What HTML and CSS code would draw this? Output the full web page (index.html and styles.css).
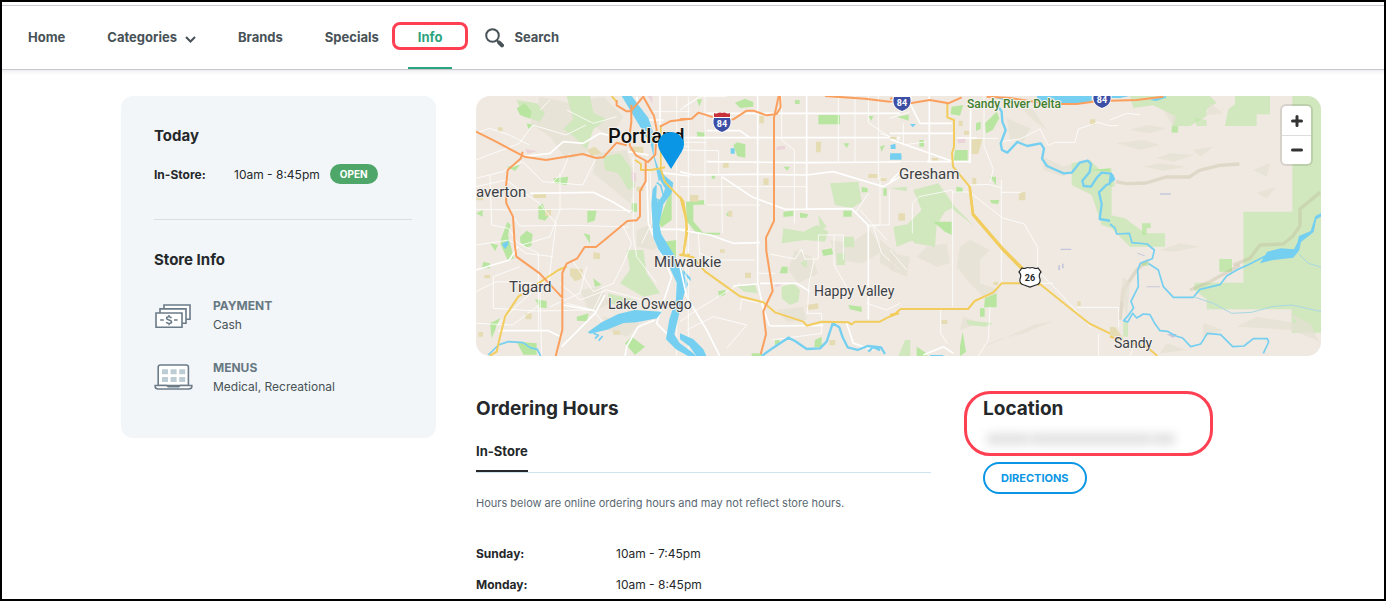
FILE: index.html
```html
<!DOCTYPE html>
<html lang="en">
<head>
    <meta charset="UTF-8">
    <meta name="viewport" content="width=device-width, initial-scale=1.0">
    <title>Store Info</title>
    <link rel="stylesheet" href="styles.css">
</head>
<body>
    <header class="header">
        <nav class="nav">
            <a href="#">Home</a>
            <button type="button" class="categories">Categories
                <svg class="chevron" width="11" height="7" viewBox="0 0 11 7"><path d="M1 1l4.500 4.500L10 1"/></svg>
            </button>
            <a href="#">Brands</a>
            <a href="#">Specials</a>
            <a href="#" class="active">Info<span class="highlight highlight-info"></span></a>
            <a href="#" class="search">
                <svg width="20" height="20" viewBox="0 0 20 20"><circle cx="7.500" cy="7.500" r="6.300"/><path class="lens-joint" d="M11.800 12.300l2 2"/><path class="handle" d="M14.200 14.600l2.800 2.800"/></svg>
                Search
            </a>
        </nav>
    </header>

    <div class="page">
        <aside class="sidebar">
            <h2>Today</h2>
            <div class="today">
                <strong>In-Store:</strong>
                <span>10am - 8:45pm</span>
                <span class="badge">OPEN</span>
            </div>
            <hr>
            <h2>Store Info</h2>
            <div class="info-list">
                <div class="info-item">
                    <svg width="39" height="38" viewBox="0 0 39 38" class="info-icon">
                        <path d="M10 9h26v14.300H10z"/>
                        <path d="M6 12.900h26v14.300H6z"/>
                        <path d="M2 17h26v14.200H2z"/>
                        <path class="dollar" d="M6.200 24h3.600M20 24h3.600M17.400 22.200c-.6-1.900-4.800-1.800-4.800 0 0 2.200 5 1.300 5 3.700 0 2.100-4.600 2-5.200 0M15 18.900v1.800M15 27.400v1.800"/>
                    </svg>
                    <div>
                        <h3>PAYMENT</h3>
                        <p>Cash</p>
                    </div>
                </div>
                <div class="info-item">
                    <svg width="39" height="38" viewBox="0 0 39 38" class="info-icon">
                        <path d="M4.200 27.500V9.200q0-2.200 2.200-2.200h25.800q2.200 0 2.200 2.200v18.300z"/>
                        <path d="M1.200 27.500h11.500l1.500 1.200h10.600l1.500-1.200h11.500v1q0 2.500-3.200 2.500H4.400q-3.200 0-3.200-2.500z"/>
                        <path class="screen" d="M8 11.200h6v5H8zM16.600 11.200h6v5h-6zM25.200 11.200h6v5h-6zM8 19h6v5H8zM16.600 19h6v5h-6zM25.200 19h6v5h-6z"/>
                    </svg>
                    <div>
                        <h3>MENUS</h3>
                        <p>Medical, Recreational</p>
                    </div>
                </div>
            </div>
        </aside>

        <main class="content">
            <div class="map">
                <svg class="map-canvas" viewBox="0 0 845 260" preserveAspectRatio="xMidYMid slice">
                    <defs>
                        <g id="interstate">
                            <path d="M-9-6h18q2 9-3 13-3 3-6 4-3-1-6-4-5-4-3-13z" fill="#fff"/>
                            <path d="M-8-4H8q2 7-2.500 11-2.500 2-5.500 3-3-1-5.500-3Q-10 3-8-4z" fill="#3d4fa5"/>
                            <path d="M-8-5v-4q2 1 4 0 2-1 4 0 2-1 4 0 2 1 4 0v4z" fill="#c8303a"/>
                        </g>
                    </defs>

                    <!-- west: Beaverton, Tigard -->
                    <g transform="translate(-6 -6) scale(.33333)">
                        <path class="hill" d="M210 20l90 20 70 60-20 90-60 20-50-70-60-40zM380 190l90-10 30 90-20 70-60-50-50-40zM500 420l50-20 30 60-30 20-50-10zM330 600l60-10 30 50-60 30zM400 680l110 20-40 40-60-20zM340 30l60-10 60 60-40 60-60-40z"/>
                        <path class="wood" d="M140 30l60 10 25 30-15 25-50-15zM290 18h70l10 50 40 20-40 30-20 60-40-40-30-20 30-30zM400 200l50-10 30 40 15 60-20 10-30-50-40-10zM470 480h50l10 70 40 60-50 10-70-40 30-40zM415 610l80 20-30 20-50-10z"/>
                        <path class="park" d="M205 350l12-10 18 40-10 12-20-5zM352 362h28l-6 30-22 6zM150 440l20-18 18 10-4 35-15 6-18-16zM92 450l20-55 10 10-8 30 18 70-18 8-22-50zM140 55l25-15 20 25-5 20-30-10zM250 265l45-5-5 25-35-5zM40 515l20 5v15H35zM60 460l25 5-10 18zM195 628l35 5v22l-22-3zM565 400l30-80 10-20v90l-30 22zM580 455l40-5v50l-25 10zM60 700l30-15-25 60zM465 760l20-20 40 30-30 25zM320 680l36-10-5 24-30-2zM140 755l60 5v34h-40zM340 430l20 5v25zM370 565l25 20-20 5zM110 230l40-5-15 18zM485 340h16v25h-16zM18 370l20-10v20zM170 100l20 5-15 12z"/>
                        <path class="tan" d="M225 358h18v20h-18zM300 535l38 3-3 28-20 8-15-18zM370 487l20 3v17h-20zM18 315h22v16H18zM500 290h20v14h-20zM190 312h38v12h-38zM165 670h20v18h-18zM430 722h20v12h-20zM43 555h18v10H43zM350 180l25-10 20 20-30 8zM84 112h14v12H84zM480 170h40v20h-40zM25 726h14v14H25z"/>
                        <path class="pink" d="M165 178l38 5-30 8zM484 245l14 5v22h-14zM620 130l16 6-8 12zM533 18h14v22z"/>
                        <path class="road thin" d="M18 265l80-20 60-30 60 60 120 10 40-80M18 358l140 2 150-3 180 5M60 255l5 150 50 10 30 45 60 30v230M18 290l90-20 100 70 50 60-20 160-100 90-60 60M270 250v110l-30 80-85 25M118 358l30 50 170-2 160 5M18 465l100-15 50 40 80 10M300 190l-25 60-30 30M18 605l60-30 120 5M70 655V560l80-30M250 545l-40 65 5 185M270 580l60 50 80-30 110 30M310 515l60 90 60-25 30-60 25-60-30-60M290 60l80 40 70-20M210 60l30-30M18 130l40-15 60 20 60 30M18 210l130-50 40-55 100 30 60-30M490 200v240l10 60 60 80M540 240l5 160-30 60M620 20v780M655 20v780M575 170h84M545 65h115M18 700l110 5 80-60M400 600l-30 60-170 3-130-8M350 530l-20 80-90 40M290 640l80 20 30 40"/>
                        <path class="road" d="M160 200l80-10 40-35 60 5 50-30 50 10M180 310l190-3 60 30 50 30M18 540l100-30 25-40M280 645l95 18M275 770l100-100 30-55M85 722h150l40 20M555 690l-50 20-35 60-5 30M530 240l5 160 20 50 50 110-40 120-5 20 60 60 50 40M475 185l60 10M570 18v230l90 10M500 90h80M545 418h115M500 20l20 140"/>
                        <path class="water" d="M455 18h30l30 40 20 25 16 50v60l14 40 20 25 25 20-5 30-25 35-12 60 6 30 25 40 30 50 25 60-12 30-15 60-14 60 15 25 40 30 40 40v25l-45-50-45-25-30-30 10-60 20-60 2-50-30-65-25-35-15-35-6-100 4-45 18-25-10-50-14-60-30-50z"/>
                        <path class="water" d="M575 665l-80-5-50 12-50 25-42 30 8 4 50-12 50-20 40-2 60-12zM640 540l22 24v10l-22-24zM95 462l20-10v12l-10 14z"/>
                        <path class="land" d="M555 285l15-15 15 25-8 30-14 10-8-22z"/>
                        <path class="river" d="M55 795l30-30 30-10 45 3M160 758l20 15 22 5 10 20M370 730l15 6-10 10M398 738l-12 14M560 278l12 8 8 30-10 16-14-6 2-40"/>
                        <path class="arterial" d="M60 797l20-12 10-45 15-60 40-60 60-40 60-40 25-10M425 18l14 16M495 210l18 12v18h30l42-8M572 105v130l12 40 48 50 15 60 5 40-12 70M628 494h32"/>
                        <path class="freeway" d="M18 125l60 30 85 45 65 10 110-18 40 12 22-2 40-44 30 8M158 185l-5 20-40 35-6 60 2 40 20 40 5 80 5 40 70 50 70 75M440 30v16l30 18 12 0 38-44 12 22 20 36 8 40-4 76-22 22-36-20-18-28-3-20 7-52v-52M527 214v60l-17 30v75l-10 12-28 2-60 50-34 28h-34l-22 34-32 16-13 28v170l-20 80M570 110l30-16 60-8"/>
                    </g>

                    <!-- middle: Happy Valley -->
                    <g transform="translate(204 -6) scale(.33333)">
                        <path class="hill" d="M345 480l50 20 20 50-60 30-30-40zM290 660l80-10 10 40-60 5zM450 450l60 10 60-40 40 60-60 40-80-10zM600 450l50 40-10 50-40-20z"/>
                        <path class="wood" d="M310 415l60 10 40-20 35 20-10 30-60-5-70 10zM450 280l85-5 10 60-30 20-50-10zM305 590l35-10 20 20-5 35-25 10-25-20zM165 585h60l8 25-40-5zM360 520l20-10v25zM470 490h25v35h-25zM490 440h32v32h-32zM415 375l25 35-20 10z"/>
                        <path class="park" d="M165 38l30-12 25 10v14l-40 4zM415 75h65v28h-65zM160 165l12-8 24 6v40l-24-4zM18 335l55-5v14H40v50l30 35-25-5-25-30zM50 28h16l-8 22zM50 125l25 3v12H52zM95 256h10v10H95zM310 365l30-3v16l-30 3zM360 368l25 5-5 10h-20zM490 362h25v18h-25zM425 480l30-5 5 18-30 5zM305 530h18v20h-24zM114 604l22-5v15l-18 6zM505 645l40 5v16l-35-8zM545 290l18 5v12h-18zM405 750l20-10v32h-22zM345 30h14v12h-14zM490 160h18l-8 14zM565 78h16l-8 14zM610 295h10v22h-10zM600 170l15-5-10 20zM140 368h16v10h-16zM310 230h20l-8 12zM285 750h14v14h-14zM215 790h30v8h-30zM65 428h55v6H65z"/>
                        <path class="tan" d="M408 155h16l-2 32h-14zM238 78h14v22h-14zM250 265h16v20h-16zM30 315h25v20H30zM130 220l16-3v16h-18zM145 362h12v18h-12zM565 252h28v12h-28zM120 478h14v10h-14zM195 548h18v16h-18zM448 750h18v16h-18zM380 645l35-5v16l-30 4zM600 265h20v8h-20z"/>
                        <path class="pink" d="M290 170l25-3v10l-25 4zM285 580h28l-20 10h-8z"/>
                        <path class="water" d="M632 165l14-4v16h-12zM630 190h34v18l-30-4zM152 175h12v16h-12z"/>
                        <path class="road thin" d="M75 18v325M0 180l116 2v70M0 157h80M125 260l2 170M80 345h160M0 290h380M305 20v130l38 30v220M475 18v200M525 18v200M595 18v250M415 435h75v75M415 435v72h-40l-10-30-20 30-75-15M462 435v90l40 70M402 510l-15 70-5 90M380 670h45v60l-150 20M55 430l5 80M60 490l45 20h120M0 695l50-35 130-80M20 720l80-40 100 25-60 70M180 660l5-32 50 10M235 550h50M565 18v80l90 60M600 130l60 20M600 70h60M560 410l40-5V260M565 310l-40 60M540 360l80 90M580 410l25 80 55 50M560 640l60 20 40-20M18 470v150M0 60l60-40 80 0M60 20l-50 30M628 300v105h-60"/>
                        <path class="road" d="M233 18v560l15 70 20 60M380 18v340M0 245l40 10 180-2 160 2 80-10 150 45 50-30M0 420l90 15 70 25 80-2M125 260l90 60 100 38 200-2 50 50v282M240 580h110l40 25M160 588l70-6M0 143h660M80 70h580M80 215l300 3 280-2M270 708l160-2M0 530l20 90 60 100 40 80M500 700l20 60 60 20M80 122h100l30 22"/>
                        <path class="river wide" d="M245 798l35-25 45-30 20 10 35 24 40-2 20-20 18-55 20 12 10 30 15 30 30 8 30-12 40 4 12 20M565 785l15-14 20 10"/>
                        <path class="water" d="M0 730l40 18 30 30 10 22H50l-20-30-30-22z"/>
                        <path class="arterial" d="M0 320l10 14 10 60-2 40-8 60M0 494l40 8 35 42 105 75 70 18 35 30 85 28 10 12 45-12 80 2 10 6 10-8h75l22-12 35-14"/>
                        <path class="freeway" d="M0 88l35-2 20-18 20 6 50 16 35-2 40-26 20 0 40 14 30-4 12-20-2-34M296 18l-14 65v310l-24 50 1 40 19 120-20 42-8 20 8 68-16 60M435 18l120 8 100 12"/>
                    </g>

                    <!-- Gresham -->
                    <g transform="translate(414 -6) scale(.33333)">
                        <path class="hill" d="M210 470l30-20 60 30-30 30v70l60 20-40 30-50-50-40-50zM110 470l60-10 10 60-40 10-60-30zM0 490l60 10-10 60-50-20zM310 760l120-55 60-12-90 38-60 12-70 30zM350 85l70 30-20 40-40-5zM380 40l50 20 40 60-40-30zM460 200l60 30 60-20-60 50-60-20zM220 680l50 20-60 20z"/>
                        <path class="wood" d="M70 300l75-20 50 70 60 60-70-55-20 10-25 40-5 65-60-10-40-40 60-60zM10 410l60-10v50l-50 20zM545 220l55-10 30 30 35-5v180l-30-10-30-90-60-30zM230 690l80 10-25 10-50-5zM0 295l50-5v14zM45 750h16v48H25z"/>
                        <path class="park" d="M195 180h38v32h-42zM185 50l35-5-10 32-28-5zM285 100l35-35 8 20-20 35-20 10zM258 100l14-5v22l-14 6zM130 395h55v40l-20-10zM285 625l35-15v42h-38zM270 655h14v25h-14zM200 290l18 3v14h-20zM300 330h28l-4 12-20-2zM20 80l36-6v18zM88 150h14v20H88zM218 725l10 60-18 14v-30zM300 260h18v26zM600 240l60-5v10zM80 770l30 20v8H80z"/>
                        <path class="tan" d="M245 148l32-2-12 46h-20zM388 308l18-3v26h-20zM25 370h20v22H25zM206 92h12v16h-12zM222 122h16v12h-16zM247 264h12v20h-12zM154 690h18v12h-18zM600 88h16v16h-16zM310 575h14v10h-14zM562 634h10v14h-10zM126 204h18v10h-18zM0 140h20v8H0z"/>
                        <path class="pink" d="M202 148l24-4v14l-22 2z"/>
                        <path class="mauve" d="M512 476h32v4h-32zM505 526h5v14h-5zM516 521h5v14h-5z"/>
                        <path class="water" d="M440 18h165v18l-60 8-60-3-40-8zM300 18l60 10 60 12-60-3zM60 102h18l-10 10zM0 195l34 4v10H0zM2 165h14v12H2zM120 795h40v4h-40z"/>
                        <path class="road thin" d="M188 300v350M188 306h50l100 78 65 18 40 70v70l60 60 100 110M334 270v310M187 300l-100 20-20 20v90M235 285l60-2 39 10M334 307h60M152 660v70l20 30M300 650l-5 100-30 48M490 580h-60M560 652h100M626 730v68M0 480l50 60M40 100v65l70-10M0 85l60-20M282 18v150l28 70-10 40M245 145h80M330 155l60-8 60-30 25 50 20-10 60 0 10-40 60-20 30 10h30M0 215h180M0 40l60-15"/>
                        <path class="road" d="M60 40l30 60h95M118 18v200M0 148l185 65M242 50l-2 170M255 35l70 10M110 215h130M0 275l40-40M100 795l60-25 30 20M200 144h60M0 130h190"/>
                        <path class="river wide" d="M325 50l10 15 2 30 10 25-15 40 4 20 16 8 30-32 30 12 40-8 10 16-6 30 15 22 50 22 24-2 24-30 24-6 10 10-4 24-22 26 4 16 22 2 18-28 14-14 28 3-4 30-10 4-22 22 8 36-6 44 34 6"/>
                        <path class="arterial" d="M172 40v42l20 8v80l-6 20 3 40 50 60 10 80 90 105 60 60 50 46 80 65 70 55 62 30M0 675l15-4 17-14h202l20-24 55-25 26-28h90"/>
                        <path class="arterial heavy" d="M239 290l10 85 90 105 60 60 50 46"/>
                        <path class="freeway" d="M0 26l10-2M60 40l60-10 55 10 40-18M290 20l70 4 120 18 80 0 60-8 40-14"/>
                    </g>

                    <!-- east: Sandy -->
                    <g transform="translate(634 -6) scale(.33333)">
                        <path class="wood" d="M60 18h240l20 20-30 20v20l-50 30H205v18h-20l5-50-60-30-60 8zM375 18h105v55h-40v35h-95l10-50 20-15zM547 18h88v710h-90v-70H290v-30l-40-30 5-20h145V365h147zM0 375l45 10 60 45h60v40h-60L60 470 0 410z"/>
                        <path class="park" d="M328 507h38v38h-38zM95 515h20v12H95zM185 108h18v20h-18zM96 400h26v15h-12v20H96z" opacity=".8"/>
                        <path class="park" d="M40 695h14v45H40zM255 85l35 5v18h-30zM0 255l14 20v15H0z" opacity=".5"/>
                        <path class="ridge" d="M18 275l30 6 60-2 60-18h70l30-20 60-15 60-4M30 690l10-90 40-60 35-30M240 600l60-25 90-50"/>
                        <path class="ridge" d="M370 525l50-20 30-40 70-3 30-25 20-30v-50l60-50"/>
                        <path class="hill" d="M60 120l50-15 60 10-50 15zM20 160l80-10 50 15-60 15zM140 205l40-15 70 5-60 20zM250 180l60-10-40 30zM430 240l50-20-10 40zM440 310l60-20-30 35zM150 480l60-20 60 10-80 15zM40 560l-10 60 20 60 10-100zM380 710l60-30 120 20 60 50-80-30zM280 700l60 20-60 20zM170 760l60 20-80 10zM540 670l60 30 30 60-60-50zM100 230l50-10 80 10-70 12zM160 60l40 20-10 30zM300 40l40 30-50 5z"/>
                        <path class="tan" d="M0 710l16 2 30 42-46-16z"/>
                        <path class="mauve" d="M150 310h32v4h-32zM110 589h40v3h-40zM82 488l22 8v3l-22-8zM170 732h30l-10 12z"/>
                        <path class="water" d="M450 520l22-35 40-10 40 3 10-20 5-20 35-15 14-45 17-8v10l-14 8-8 38-38 30-5 25-18 22-60 7zM0 250l10 3 6 16-16 12zM0 18h60l-30 6H0zM120 30l48-12v5l-30 10z"/>
                        <path class="river" d="M0 402l15 12 5 18 38-2 8 28 45 4 22 18-6 26-36 14-8 20 2 50-22 44 8 20-16 22-14 16 12 4 15-26 12 14 20-12 20 2 14 26 16 22 22 2 26 14 20 6 24 26 30-8 20-32 40 4 36 36 34-2 28-22 42 0 4 10-16 34M115 520l30 20 15 50 30 32 60 0 20-24 60-14 20-26 30-18 35-16 50-25"/>
                        <path class="creek" d="M250 620l60 20 55 30 60-3 60-17 60-5 90 20M565 490l30 30 40 12"/>
                        <path class="road thin" d="M0 652h26v60M0 90l50-20 40 4M60 798l8-20"/>
                        <path class="arterial" d="M0 740l60 20 50 10 32 28"/>
                        <path class="freeway" d="M0 32l80-2 80-10"/>
                    </g>

                    <use href="#interstate" x="246" y="26"/>
                    <use href="#interstate" x="426" y="5"/>
                    <use href="#interstate" x="626" y="2"/>
                    <path class="us-route" d="M546 172q2 1 4 0 2-1 4 0 2-1 4 0 2 1 4 0l3 4q-3 3-1 7 1 5-4 6l-6 2-6-2q-5-1-4-6 2-4-1-7z"/>
                    <g class="shield-text">
                        <text x="246" y="31">84</text>
                        <text x="426" y="10">84</text>
                        <text x="626" y="7">84</text>
                        <text x="554" y="185" class="dark">26</text>
                    </g>
                    <g class="place">
                        <text x="0" y="101">averton</text>
                        <text x="33" y="196">Tigard</text>
                        <text x="132" y="213" class="small">Lake Oswego</text>
                        <text x="178" y="171">Milwaukie</text>
                        <text x="338" y="200" class="small">Happy Valley</text>
                        <text x="423" y="83">Gresham</text>
                        <text x="638" y="252" class="small">Sandy</text>
                        <text x="491" y="12" class="park-name">Sandy River Delta</text>
                        <text x="132" y="47" class="city">Portland</text>
                    </g>
                    <path class="pin" d="M195 73l-10.500-17Q182 52 182 48.500a13 12.500 0 0 1 26 0q0 3.500-2.500 7.500z"/>
                </svg>
                <div class="zoom">
                    <button type="button" aria-label="Zoom in"><svg width="12" height="12" viewBox="0 0 12 12"><path d="M1.500 6h9M6 1.500v9"/></svg></button>
                    <button type="button" aria-label="Zoom out"><svg width="12" height="12" viewBox="0 0 12 12"><path d="M1.500 6h9"/></svg></button>
                </div>
            </div>

            <div class="details">
                <section class="hours">
                    <h1>Ordering Hours</h1>
                    <div class="tabs">
                        <button type="button" class="tab">In-Store</button>
                    </div>
                    <p class="note">Hours below are online ordering hours and may not reflect store hours.</p>
                    <table>
                        <tr><th scope="row">Sunday:</th><td>10am - 7:45pm</td></tr>
                        <tr><th scope="row">Monday:</th><td>10am - 8:45pm</td></tr>
                    </table>
                </section>
                <section class="location">
                    <span class="highlight highlight-location"></span>
                    <h1>Location</h1>
                    <div class="address"><span></span><span></span><span></span></div>
                    <a href="#" class="directions">DIRECTIONS</a>
                </section>
            </div>
        </main>
    </div>
</body>
</html>
```
FILE: styles.css
```css
* {
    box-sizing: border-box;
}

body {
    margin: 0;
    padding-top: 5px;
    font-family: Inter, "Liberation Sans", sans-serif;
    font-size: 12px;
    color: #25282a;
    background: #fff;
}

/* black frame round the window */
body::after {
    content: "";
    position: fixed;
    inset: 0;
    border: 2px solid #000;
    pointer-events: none;
}

h1, h2, h3, p {
    margin: 0;
}

button {
    font-family: inherit;
    padding: 0;
    border: none;
    background: none;
    cursor: pointer;
}

a {
    color: inherit;
    text-decoration: none;
}

/* header */
.header {
    border-top: 1px solid #cbcbd5;
    border-bottom: 1px solid #c8c9d0;
    box-shadow: 0 2px 4px rgba(0, 0, 0, 0.08);
}

.nav {
    display: flex;
    align-items: stretch;
    height: 63px;
    padding-left: 28px;
    gap: 42px;
}

.nav a,
.nav button {
    padding-top: 2px;
    border-bottom: 2px solid transparent;
    font-size: 13px;
    font-weight: 700;
    line-height: 59px;
    color: #485257;
    white-space: nowrap;
}

.nav .categories {
    display: flex;
    align-items: center;
    gap: 8px;
}

.chevron {
    margin-top: 3px;
}

.chevron path {
    fill: none;
    stroke: #485257;
    stroke-width: 2;
}

.nav .active {
    position: relative;
    margin: 0 -9px 0 -13px;
    padding: 2px 10px 0;
    color: #2ba37c;
    border-color: #2ba37c;
}

.nav .search {
    display: flex;
    align-items: center;
    gap: 9px;
}

.search svg {
    fill: none;
    stroke: #485257;
    stroke-width: 2;
}

.search .handle {
    stroke-width: 4;
    stroke-linecap: round;
}

.highlight {
    position: absolute;
    border: 3px solid #ff4053;
    pointer-events: none;
}

.highlight-info {
    top: 16px;
    left: -16px;
    right: -16px;
    height: 28px;
    border-radius: 8px;
}

.highlight-location {
    top: -6px;
    left: -19px;
    width: 249px;
    height: 65px;
    border-radius: 26px;
}

/* page */
.page {
    display: flex;
    align-items: flex-start;
    gap: 40px;
    padding: 26px 65px 0 121px;
}

.sidebar {
    flex: 0 0 315px;
    padding: 30px 24px 42px 33px;
    border-radius: 12px;
    background: #f2f6f9;
}

.sidebar h2 {
    font-size: 15px;
    line-height: 20px;
}

.today {
    display: flex;
    align-items: center;
    height: 20px;
    margin-top: 18px;
    gap: 10px;
}

.today strong {
    width: 70px;
}

.badge {
    padding: 0 10px;
    border-radius: 10px;
    font-size: 10px;
    font-weight: 700;
    line-height: 20px;
    color: #fff;
    background: #4ea769;
}

.sidebar hr {
    margin: 35px 0 30px;
    border: none;
    border-top: 1px solid #d9dfe3;
}

.info-list {
    display: flex;
    flex-direction: column;
    gap: 24px;
    margin-top: 26px;
}

.info-item {
    display: flex;
    gap: 20px;
    line-height: 19px;
    color: #485257;
}

.info-item h3 {
    font-size: 12px;
    font-weight: 700;
    color: #677882;
}

.info-icon {
    fill: #fff;
    stroke: #6b7b88;
    stroke-width: 1.6;
}

.info-icon .dollar {
    fill: none;
}

.info-icon .screen {
    fill: #bccdd4;
    stroke: none;
}

.content {
    flex: 1;
    min-width: 0;
}

/* map */
.map {
    position: relative;
    height: 260px;
    border-radius: 14px;
    overflow: hidden;
    background: #efe9e1;
}

.map-canvas {
    display: block;
    width: 100%;
    height: 100%;
}

.land { fill: #efe9e1; }
.hill { fill: #e5dfd3; opacity: 0.7; }
.wood { fill: #d1e7be; }
.park { fill: #b8e6a0; }
.tan { fill: #e6dcb4; }
.pink { fill: #ead3d9; }
.mauve { fill: #c5c6dc; }
.water { fill: #75cff0; }

.ridge,
.road,
.river,
.creek,
.arterial,
.freeway {
    fill: none;
    stroke-linejoin: round;
}

.ridge {
    stroke: #b8b08f;
    stroke-width: 10;
    opacity: 0.3;
}

.road {
    stroke: #fff;
    stroke-width: 5;
}

.road.thin {
    stroke-width: 3;
    opacity: 0.8;
}

.river {
    stroke: #75cff0;
    stroke-width: 5;
}

.river.wide {
    stroke-width: 7;
}

.creek {
    stroke: #a8d8e2;
    stroke-width: 3;
}

.arterial {
    stroke: #f2cd5d;
    stroke-width: 6;
}

.arterial.heavy {
    stroke-width: 8;
}

.freeway {
    stroke: #fb9f5e;
    stroke-width: 6;
}

.us-route {
    fill: #fff;
    stroke: #25282a;
    stroke-width: 1.2;
}

.pin {
    fill: #0b96e5;
}

.place text {
    font-family: Roboto, sans-serif;
    font-size: 15px;
    fill: #3c3f45;
    stroke: #f5f1ec;
    stroke-width: 2px;
    paint-order: stroke;
}

.place .small {
    font-size: 14px;
}

.place .city {
    font-size: 20px;
    font-weight: 500;
    fill: #111;
}

.place .park-name {
    font-size: 12px;
    font-weight: 500;
    fill: #3f7f2f;
}

.shield-text text {
    font-family: Roboto, sans-serif;
    font-size: 9px;
    font-weight: 700;
    fill: #fff;
    text-anchor: middle;
}

.shield-text .dark {
    fill: #25282a;
}

.zoom {
    position: absolute;
    top: 10px;
    right: 10px;
    width: 29px;
    border-radius: 4px;
    background: #fff;
    box-shadow: 0 0 0 2px rgba(0, 0, 0, 0.1);
}

.zoom button {
    display: flex;
    align-items: center;
    justify-content: center;
    width: 100%;
    height: 29px;
}

.zoom button + button {
    border-top: 1px solid #ddd;
}

.zoom path {
    stroke: #333;
    stroke-width: 3;
    stroke-linecap: round;
}

/* hours and location */
.details {
    display: flex;
    gap: 52px;
    margin-top: 41px;
}

.details h1 {
    font-size: 19px;
    line-height: 24px;
}

.hours {
    flex: 1;
}

.location {
    position: relative;
    flex: 0 0 338px;
}

.tabs {
    margin-top: 20px;
    border-bottom: 1px solid #cfe3ee;
}

.tab {
    display: block;
    padding-bottom: 9px;
    border-bottom: 2px solid #25282a;
    font-size: 13px;
    font-weight: 700;
    line-height: 20px;
    color: #25282a;
}

.note {
    margin-top: 21px;
    font-size: 11px;
    line-height: 18px;
    color: #5a6872;
}

.hours table {
    margin-top: 26px;
    border-collapse: collapse;
}

.hours th,
.hours td {
    height: 31px;
    padding: 0;
    text-align: left;
}

.hours th {
    width: 140px;
}

.address {
    display: flex;
    gap: 2px;
    margin: 12px 0 17px;
    padding-left: 4px;
    filter: blur(5px);
}

.address span {
    width: 42px;
    height: 12px;
    background: #e2e2e2;
}

.address span:nth-child(2) {
    width: 120px;
}

.address span:nth-child(3) {
    width: 22px;
}

.directions {
    display: inline-block;
    padding: 0 16px;
    border: 2px solid #0b96e5;
    border-radius: 16px;
    font-size: 11px;
    font-weight: 700;
    line-height: 28px;
    color: #0b96e5;
}
```
